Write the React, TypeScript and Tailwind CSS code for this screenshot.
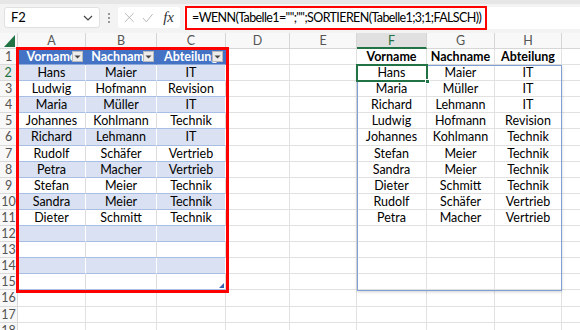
import React from 'react';

const colWidths = ['w-[68px]', 'w-[71px]', 'w-[69px]', 'w-[64px]', 'w-[67px]', 'w-[70px]', 'w-[68px]', 'w-[67px]'];
const colLetters = ['A', 'B', 'C', 'D', 'E', 'F', 'G', 'H'];

const headers = ['Vorname', 'Nachname', 'Abteilung'];

const source = [
  ['Hans', 'Maier', 'IT'],
  ['Ludwig', 'Hofmann', 'Revision'],
  ['Maria', 'Müller', 'IT'],
  ['Johannes', 'Kohlmann', 'Technik'],
  ['Richard', 'Lehmann', 'IT'],
  ['Rudolf', 'Schäfer', 'Vertrieb'],
  ['Petra', 'Macher', 'Vertrieb'],
  ['Stefan', 'Meier', 'Technik'],
  ['Sandra', 'Meier', 'Technik'],
  ['Dieter', 'Schmitt', 'Technik'],
];

const sorted = [
  ['Hans', 'Maier', 'IT'],
  ['Maria', 'Müller', 'IT'],
  ['Richard', 'Lehmann', 'IT'],
  ['Ludwig', 'Hofmann', 'Revision'],
  ['Johannes', 'Kohlmann', 'Technik'],
  ['Stefan', 'Meier', 'Technik'],
  ['Sandra', 'Meier', 'Technik'],
  ['Dieter', 'Schmitt', 'Technik'],
  ['Rudolf', 'Schäfer', 'Vertrieb'],
  ['Petra', 'Macher', 'Vertrieb'],
];

const rows = Array.from({ length: 18 }, (_, i) => i + 1);

// dropdown button of an Excel table header
const FilterButton = () => (
  <div className="absolute right-[2px] top-[2px] w-[11px] h-[11px] bg-[#ececec] border border-[#b9b9b9] flex items-center justify-center">
    <svg width="7" height="4" viewBox="0 0 7 4">
      <polygon points="0.5,0.5 6.5,0.5 3.5,3.5" fill="#444" />
    </svg>
  </div>
);

const cellClass = (r: number, c: number) => {
  if (c < 3 && r <= 15) {
    if (r === 1) return 'bg-[#4472C4] text-white font-bold border-r-[#4472C4] border-b-[#8EA9DB]';
    if (r % 2 === 0) return 'bg-[#D9E1F2] text-black border-r-white border-b-[#A9BEE4]';
    return 'bg-white text-black border-r-[#dcdcdc] border-b-[#A9BEE4]';
  }
  if (c >= 5 && r === 1) return 'bg-white text-black font-bold border-r-[#e1e1e1] border-b-[#e1e1e1]';
  return 'bg-white text-black border-r-[#e1e1e1] border-b-[#e1e1e1]';
};

const cellText = (r: number, c: number) => {
  if (c < 3) {
    if (r === 1) return headers[c];
    if (r >= 2 && r <= 11) return source[r - 2][c];
  }
  if (c >= 5) {
    if (r === 1) return headers[c - 5];
    if (r >= 2 && r <= 11) return sorted[r - 2][c - 5];
  }
  return '';
};

const FormulaBar = () => (
  <div className="h-[33px] bg-[#f3f3f3] relative">
    <div className="h-[4px] bg-[#e6e6e6]" />
    <div className="flex items-start pt-[3px]">
      {/* name box */}
      <div className="ml-[4px] w-[96px] h-[21px] bg-white rounded-[3px] border border-[#e0e0e0] flex items-center justify-between px-[6px]">
        <span className="text-[13px] text-black">F2</span>
        <svg width="10" height="6" viewBox="0 0 10 6">
          <path d="M1 1 L5 5 L9 1" stroke="#444" strokeWidth="1.2" fill="none" />
        </svg>
      </div>
      <div className="w-[18px] h-[21px] flex flex-col items-center justify-center gap-[2px]">
        <div className="w-[2px] h-[2px] bg-[#999]" />
        <div className="w-[2px] h-[2px] bg-[#999]" />
        <div className="w-[2px] h-[2px] bg-[#999]" />
      </div>
      {/* fx buttons */}
      <div className="w-[62px] h-[21px] bg-white rounded-[3px] flex items-center px-[6px] gap-[7px]">
        <svg width="11" height="11" viewBox="0 0 11 11">
          <path d="M1 1 L10 10 M10 1 L1 10" stroke="#b5b5b5" strokeWidth="1" />
        </svg>
        <svg width="12" height="10" viewBox="0 0 12 10">
          <path d="M1 5 L4.5 9 L11 1" stroke="#b5b5b5" strokeWidth="1" fill="none" />
        </svg>
        <span className="text-[15px] italic text-[#333] font-['Liberation_Serif',serif] leading-none ml-[3px]">fx</span>
      </div>
      {/* formula input */}
      <div className="ml-[4px] flex-1 h-[22px] bg-white relative flex items-center pl-[8px]">
        <span className="text-[12.5px] tracking-[-0.6px] text-black whitespace-nowrap">=WENN(Tabelle1="";"";SORTIEREN(Tabelle1;3;1;FALSCH))</span>
        <div className="absolute left-[1px] top-[-1px] w-[302px] h-[24px] border-2 border-[#f00]" />
      </div>
    </div>
  </div>
);

const App = () => {
  return (
    <div className="w-[580px] h-[330px] overflow-hidden bg-white font-['Lato','Liberation_Sans',sans-serif] select-none">
      <FormulaBar />

      <div className="relative">
        {/* column headers */}
        <div className="flex h-[16px] bg-[#f8f8f8]">
          <div className="w-[18px] shrink-0 border-r border-b border-[#d6d6d6] relative">
            <svg className="absolute right-[2px] bottom-[1px]" width="11" height="12" viewBox="0 0 11 12">
              <polygon points="11,0 11,12 0,12" fill="#217346" />
            </svg>
          </div>
          {colLetters.map((l, i) =>
            l === 'F' ? (
              <div key={l} className={`${colWidths[i]} shrink-0 border-r border-r-[#d6d6d6] border-b-2 border-b-[#217346] bg-[#e0e0e0] text-[#217346] text-[12.5px] leading-[15px] text-center`}>
                {l}
              </div>
            ) : (
              <div key={l} className={`${colWidths[i]} shrink-0 border-r border-b border-[#d6d6d6] text-[#555] text-[12.5px] leading-[15px] text-center`}>
                {l}
              </div>
            )
          )}
          <div className="flex-1 border-b border-[#d6d6d6]" />
        </div>

        {rows.map((r) => (
          <div key={r} className="flex h-[16.1px]">
            {r === 2 ? (
              <div className="w-[18px] shrink-0 border-r-2 border-r-[#217346] border-b border-b-[#dadada] bg-[#ececec] text-[#217346] text-[12.5px] leading-[15px] text-center">
                {r}
              </div>
            ) : (
              <div className="w-[18px] shrink-0 border-r border-b border-[#dadada] bg-[#f8f8f8] text-[#555] text-[12.5px] leading-[15px] text-center">
                {r}
              </div>
            )}
            {colWidths.map((w, c) => (
              <div
                key={c}
                className={`${w} shrink-0 border-r border-b relative overflow-hidden whitespace-nowrap text-center text-[12.5px] leading-[15px] ${cellClass(r, c)}`}
              >
                {cellText(r, c)}
                {r === 1 && c < 3 && <FilterButton />}
                {r === 15 && c === 2 && (
                  <svg className="absolute right-[1px] bottom-[1px]" width="5" height="5" viewBox="0 0 5 5">
                    <polygon points="5,0 5,5 0,5" fill="#3a62b0" />
                  </svg>
                )}
              </div>
            ))}
            <div className="flex-1 border-b border-[#e1e1e1]" />
          </div>
        ))}

        {/* red frame round the source table */}
        <div className="absolute left-[16px] top-[14px] w-[213px] h-[246px] border-[3px] border-[#f00]" />

        {/* spill range border */}
        <div className="absolute left-[357px] top-[32px] w-[205px] h-[226px] border border-[#7f9fd7] shadow-[0_1px_3px_rgba(0,0,0,0.18)]" />

        {/* active cell F2 */}
        <div className="absolute left-[356px] top-[31px] w-[72px] h-[18px] border-2 border-[#217346]">
          <div className="absolute right-[-4px] bottom-[-4px] w-[5px] h-[5px] bg-[#217346] border border-white" />
        </div>
      </div>
    </div>
  );
};

export default App;
